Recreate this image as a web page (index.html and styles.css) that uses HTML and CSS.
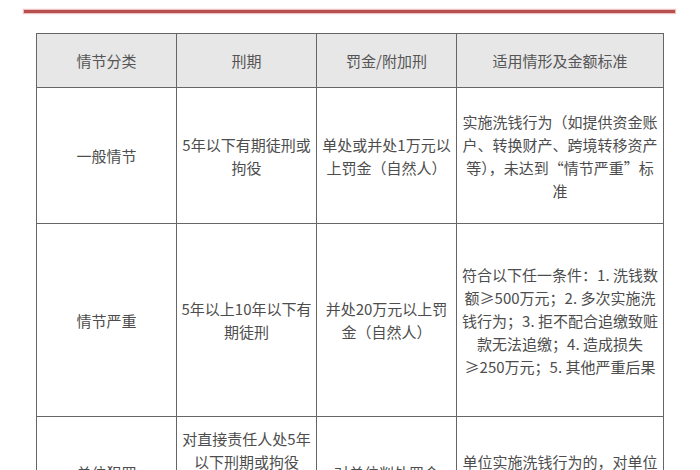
FILE: index.html
```html
<!DOCTYPE html>
<html lang="zh-CN">
<head>
<meta charset="utf-8">
<link rel="stylesheet" href="styles.css">
</head>
<body>
<div class="rule"></div>
<table class="law">
  <colgroup>
    <col class="c1"><col class="c2"><col class="c3"><col class="c4">
  </colgroup>
  <thead>
    <tr class="head">
      <th>情节分类</th>
      <th>刑期</th>
      <th>罚金/附加刑</th>
      <th>适用情形及金额标准</th>
    </tr>
  </thead>
  <tbody>
    <tr class="r1">
      <td>一般情节</td>
      <td>5年以下有期徒刑或拘役</td>
      <td>单处或并处1万元以上罚金（自然人）</td>
      <td>实施洗钱行为（如提供资金账户、转换财产、跨境转移资产等），未达到“情节严重”标准</td>
    </tr>
    <tr class="r2">
      <td>情节严重</td>
      <td>5年以上10年以下有期徒刑</td>
      <td>并处20万元以上罚金（自然人）</td>
      <td>符合以下任一条件：1. 洗钱数额≥500万元；2. 多次实施洗钱行为；3. 拒不配合追缴致赃款无法追缴；4. 造成损失≥250万元；5. 其他严重后果</td>
    </tr>
    <tr class="r3">
      <td>单位犯罪</td>
      <td>对直接责任人处5年以下刑期或拘役<br>情节严重的处5年以上10年以下</td>
      <td>对单位判处罚金</td>
      <td>单位实施洗钱行为的，对单位及直接责任人员分别处罚</td>
    </tr>
  </tbody>
</table>
</body>
</html>
```

FILE: styles.css
```css
html, body {
  margin: 0;
  padding: 0;
  background: #ffffff;
}
body {
  font-family: "Noto Sans CJK SC", "Noto Sans", sans-serif;
  color: #4d4d4d;
  overflow: hidden;
}
.rule {
  height: 3px;
  margin: 10px 25px 0 24px;
  background: #b5504e;
  box-shadow: 0 0 1px 1px rgba(226, 150, 150, 0.6);
}
.law {
  margin: 20px 0 0 36px;
  border-collapse: collapse;
  table-layout: fixed;
  width: 627px;
  font-size: 15px;
  line-height: 23px;
}
.c1, .c2, .c3 { width: 140px; }
.c4 { width: 207px; }
.law th, .law td {
  border: 1px solid #666;
  padding: 0 3px;
  text-align: center;
  vertical-align: middle;
  font-weight: normal;
}
.law th {
  background: #e7e7e7;
  color: #555;
}
.head { height: 54px; }
.r1 { height: 136px; }
.r2 { height: 193px; }
.r3 { height: 112px; }
```
